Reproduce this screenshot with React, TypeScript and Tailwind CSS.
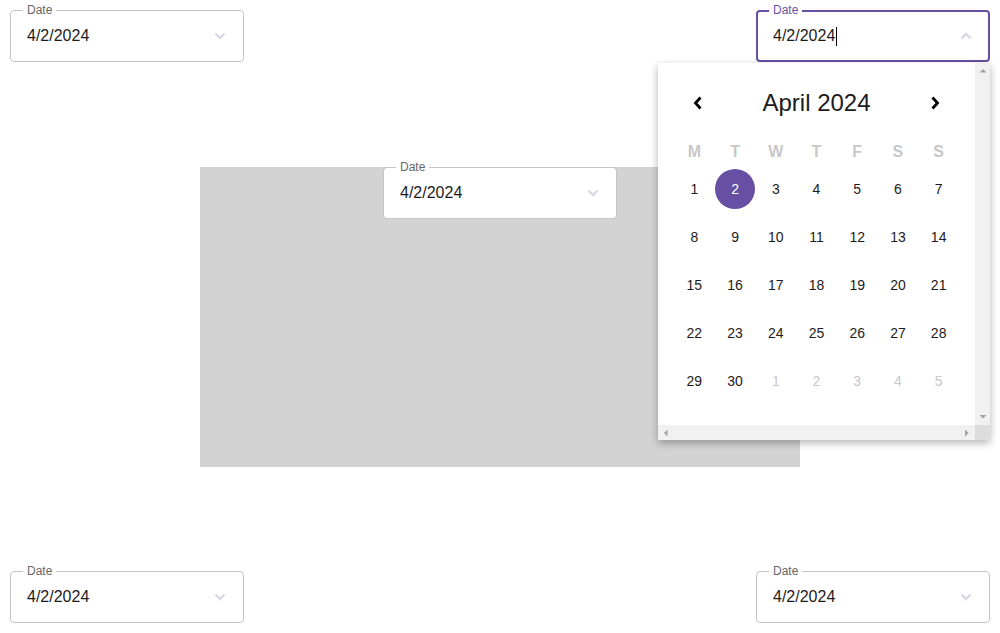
import React from 'react';

const weekdays = ['M', 'T', 'W', 'T', 'F', 'S', 'S'];

const days: Array<{ n: number; muted?: boolean }> = [
  ...Array.from({ length: 30 }, (_, i) => ({ n: i + 1 })),
  ...Array.from({ length: 5 }, (_, i) => ({ n: i + 1, muted: true })),
];

function Chevron({ up }: { up?: boolean }) {
  return (
    <svg width="12" height="8" viewBox="0 0 12 8" className="shrink-0">
      <polyline
        points={up ? '1.5,6.5 6,2 10.5,6.5' : '1.5,1.5 6,6 10.5,1.5'}
        fill="none"
        stroke="#dcd6e4"
        strokeWidth="2.4"
      />
    </svg>
  );
}

function DateField({ focused, children }: { focused?: boolean; children?: React.ReactNode }) {
  return (
    <div
      className={
        focused
          ? 'relative w-[234px] h-[52px] rounded border-2 border-[#6750a4] bg-white flex items-center pl-[15px] pr-[16px]'
          : 'relative w-[234px] h-[52px] rounded border border-[#c4c4c4] bg-white flex items-center pl-4 pr-[17px]'
      }
    >
      <span
        className={
          focused
            ? 'absolute -top-[10px] left-[11px] px-1 bg-white text-xs leading-4 text-[#6750a4]'
            : 'absolute -top-[9px] left-3 px-1 bg-white text-xs leading-4 text-[#666666]'
        }
      >
        Date
      </span>
      <span className="flex-1 flex items-center text-base text-[#1d1b20]">
        4/2/2024
        {focused && <span className="ml-px w-px h-[19px] bg-black" />}
      </span>
      <Chevron up={focused} />
      {children}
    </div>
  );
}

function Arrow({ dir }: { dir: 'up' | 'down' | 'left' | 'right' }) {
  const pts = {
    up: '0.5,4.5 4,1 7.5,4.5',
    down: '0.5,1 4,4.5 7.5,1',
    left: '4.5,0.5 1,4 4.5,7.5',
    right: '1,0.5 4.5,4 1,7.5',
  }[dir];
  const vertical = dir === 'up' || dir === 'down';
  return (
    <svg width={vertical ? 8 : 6} height={vertical ? 6 : 8} viewBox={vertical ? '0 0 8 6' : '0 0 6 8'}>
      <polygon points={pts} fill="#a3a3a3" />
    </svg>
  );
}

function Calendar() {
  return (
    <div className="absolute right-[-2px] top-[51px] z-10 w-[332px] h-[377px] flex flex-col bg-white shadow-[0_3px_8px_rgba(0,0,0,0.3)]">
      <div className="flex-1 flex min-h-0">
        <div className="flex-1 px-4 pt-4">
          <div className="h-12 flex items-center justify-between">
            <button className="w-12 h-12 flex items-center justify-center">
              <svg width="10" height="14" viewBox="0 0 10 14">
                <polyline points="7.5,1.5 2.5,7 7.5,12.5" fill="none" stroke="#000" strokeWidth="2.8" />
              </svg>
            </button>
            <span className="text-2xl text-[#1d1b20]">April 2024</span>
            <button className="w-12 h-12 flex items-center justify-center">
              <svg width="10" height="14" viewBox="0 0 10 14">
                <polyline points="2.5,1.5 7.5,7 2.5,12.5" fill="none" stroke="#000" strokeWidth="2.8" />
              </svg>
            </button>
          </div>
          <div className="mt-[7px] h-[35px] grid grid-cols-7 items-center">
            {weekdays.map((d, i) => (
              <span key={i} className="text-center text-base font-bold text-[#c8c8c8]">
                {d}
              </span>
            ))}
          </div>
          <div className="grid grid-cols-7 gap-y-2">
            {days.map((d, i) => (
              <div key={i} className="h-10 flex items-center justify-center">
                {d.n === 2 && !d.muted ? (
                  <span className="w-10 h-10 rounded-full bg-[#6750a4] text-white text-sm flex items-center justify-center">
                    2
                  </span>
                ) : (
                  <span className={d.muted ? 'text-sm text-[#c8c8c8]' : 'text-sm text-[#1d1b20]'}>{d.n}</span>
                )}
              </div>
            ))}
          </div>
        </div>
        <div className="w-[15px] bg-[#f1f1f1] flex flex-col items-center justify-between py-[5px]">
          <Arrow dir="up" />
          <Arrow dir="down" />
        </div>
      </div>
      <div className="h-[15px] flex">
        <div className="flex-1 bg-[#f1f1f1] flex items-center justify-between px-[5px]">
          <Arrow dir="left" />
          <Arrow dir="right" />
        </div>
        <div className="w-[15px] bg-[#dcdcdc]" />
      </div>
    </div>
  );
}

export default function App() {
  return (
    <div className="h-[633px] w-[1000px] bg-white flex flex-col justify-between p-[10px] font-['Liberation_Sans',Arial,sans-serif]">
      <div className="flex justify-between">
        <DateField />
        <DateField focused>
          <Calendar />
        </DateField>
      </div>
      <div className="flex-1 flex items-center justify-center">
        <div className="w-[600px] h-[300px] bg-[#d3d3d3] flex justify-center items-start">
          <DateField />
        </div>
      </div>
      <div className="flex justify-between">
        <DateField />
        <DateField />
      </div>
    </div>
  );
}
